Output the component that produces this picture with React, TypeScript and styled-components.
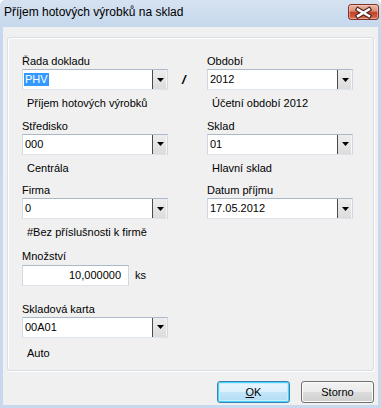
import styled, { createGlobalStyle, css } from 'styled-components'

const GlobalStyle = createGlobalStyle`
  html, body {
    margin: 0;
    padding: 0;
    background: #ffffff;
  }
  body {
    font-family: "Liberation Sans", Arial, sans-serif;
    font-size: 11px;
    color: #000;
  }
`

const ArrowIcon = () => (
  <svg width="7" height="4" viewBox="0 0 7 4">
    <path d="M0 0h7L3.5 4z" fill="#000" />
  </svg>
)

const CloseIcon = () => (
  <svg width="31" height="16" viewBox="0 0 31 16">
    <path d="M10 5.5l11 6.5M21 5.5l-11 6.5" stroke="#4a2318" strokeWidth="4.6" strokeLinecap="square" />
    <path d="M10 5.5l11 6.5M21 5.5l-11 6.5" stroke="#ffffff" strokeWidth="2.4" strokeLinecap="square" />
  </svg>
)

type ComboProps = { value: string; selected?: boolean }

const ComboBox = ({ value, selected }: ComboProps) => (
  <Combo>
    <ComboValue>{selected ? <Selected>{value}</Selected> : value}</ComboValue>
    <DropButton>
      <ArrowIcon />
    </DropButton>
  </Combo>
)

type FieldProps = {
  label: string
  value: string
  note?: string
  selected?: boolean
  noteGap?: number
}

const Field = ({ label, value, note, selected, noteGap = 7 }: FieldProps) => (
  <FieldBox>
    <Label>{label}</Label>
    <ComboBox value={value} selected={selected} />
    {note && <Note $gap={noteGap}>{note}</Note>}
  </FieldBox>
)

const App = () => {
  return (
    <>
      <GlobalStyle />
      <Window>
        <TitleBar>
          <Caption>Příjem hotových výrobků na sklad</Caption>
          <CloseButton>
            <CloseIcon />
          </CloseButton>
        </TitleBar>
        <Client>
          <GroupBox>
            <FormRow $gap={0}>
              <Field label="Řada dokladu" value="PHV" selected note="Příjem hotových výrobků" />
              <Slash>/</Slash>
              <Field label="Období" value="2012" note="Účetní období 2012" />
            </FormRow>
            <FormRow $gap={9.5}>
              <Field label="Středisko" value="000" note="Centrála" />
              <span />
              <Field label="Sklad" value="01" note="Hlavní sklad" />
            </FormRow>
            <FormRow $gap={9.5}>
              <Field label="Firma" value="0" note="#Bez příslušnosti k firmě" />
              <span />
              <Field label="Datum příjmu" value="17.05.2012" />
            </FormRow>
            <FormRow $gap={10.5}>
              <FieldBox>
                <Label>Množství</Label>
                <QuantityLine>
                  <Edit>10,000000</Edit>
                  <Unit>ks</Unit>
                </QuantityLine>
              </FieldBox>
            </FormRow>
            <FormRow $gap={17}>
              <Field label="Skladová karta" value="00A01" note="Auto" noteGap={9} />
            </FormRow>
          </GroupBox>
          <ButtonBar>
            <DialogButton $primary>
              <u>O</u>K
            </DialogButton>
            <DialogButton>Storno</DialogButton>
          </ButtonBar>
        </Client>
      </Window>
    </>
  )
}

const Window = styled.div`
  width: 381px;
  height: 408px;
  box-sizing: border-box;
  display: flex;
  flex-direction: column;
  background: linear-gradient(#d5e2f1 0px, #c6d8ed 27px, #c8d9ee 100%);
  border-top-left-radius: 5px;
  border-top-right-radius: 5px;
  overflow: hidden;
`

const TitleBar = styled.div`
  height: 27px;
  flex: none;
  display: flex;
  align-items: flex-start;
  padding: 0 2px 0 4px;
  box-sizing: border-box;
`

const Caption = styled.div`
  padding-top: 5px;
  font-size: 12px;
  line-height: 14px;
  color: #000;
  flex: 1;
`

const CloseButton = styled.div`
  width: 31px;
  height: 16px;
  margin-top: 4px;
  box-sizing: border-box;
  border: 1px solid #7f3324;
  border-radius: 3px;
  background: linear-gradient(#eab7a8 0%, #dc8b76 45%, #c4412b 50%, #cd5640 80%, #dc7a62 100%);
  box-shadow: inset 0 0 0 1px rgba(255, 220, 210, 0.45);
  display: flex;
  align-items: center;
  justify-content: center;
  svg {
    margin: -1px;
  }
`

const Client = styled.div`
  flex: 1;
  margin: 0 3px 3px;
  background: #f0f0f0;
  display: flex;
  flex-direction: column;
`

const GroupBox = styled.div`
  height: 334px;
  margin: 10px 4px 0;
  box-sizing: border-box;
  border: 1px solid #d5dfe5;
  border-radius: 3px;
  box-shadow: inset 1px 1px 0 #ffffff, 1px 1px 0 #ffffff;
  padding: 17px 0 0 14px;
  display: flex;
  flex-direction: column;
`

const FormRow = styled.div<{ $gap: number }>`
  display: grid;
  grid-template-columns: 146px 39px 146px;
  align-items: start;
  margin-top: ${(p) => p.$gap}px;
`

const FieldBox = styled.div`
  display: flex;
  flex-direction: column;
  align-items: flex-start;
`

const Label = styled.div`
  font-size: 11px;
  line-height: 13px;
  height: 13px;
  white-space: nowrap;
`

const Combo = styled.div`
  margin-top: 1px;
  width: 146px;
  height: 21px;
  box-sizing: border-box;
  border: 1px solid;
  border-color: #abb8c8 #cfd9e5 #dde4ec #cfd9e5;
  background: #ffffff;
  display: flex;
  align-items: stretch;
`

const ComboValue = styled.div`
  flex: 1;
  display: flex;
  align-items: center;
  padding-left: 2px;
  font-size: 11px;
  line-height: 13px;
  white-space: nowrap;
`

const Selected = styled.span`
  background: #3399ff;
  color: #ffffff;
  padding: 0 1px;
  margin-left: -1px;
`

const DropButton = styled.div`
  width: 14px;
  border-left: 1px solid #4a4a4a;
  background: linear-gradient(#ededed, #dcdcdc);
  box-shadow: inset -1px 0 0 #f6f6f6;
  display: flex;
  align-items: center;
  justify-content: center;
`

const Note = styled.div<{ $gap: number }>`
  margin-top: ${(p) => p.$gap}px;
  padding-left: 5px;
  font-size: 11px;
  line-height: 13px;
  white-space: nowrap;
`

const Slash = styled.div`
  margin-top: 14px;
  height: 21px;
  display: flex;
  align-items: center;
  padding-left: 14px;
  font-size: 13px;
  font-weight: bold;
  font-style: italic;
`

const QuantityLine = styled.div`
  margin-top: 2px;
  display: flex;
  align-items: center;
`

const Edit = styled.div`
  width: 107px;
  height: 21px;
  box-sizing: border-box;
  border: 1px solid;
  border-color: #abb8c8 #cfd9e5 #dde4ec #cfd9e5;
  background: #ffffff;
  padding-right: 7px;
  display: flex;
  align-items: center;
  justify-content: flex-end;
  font-size: 11px;
`

const Unit = styled.span`
  margin-left: 6px;
  font-size: 11px;
`

const ButtonBar = styled.div`
  display: flex;
  justify-content: flex-end;
  gap: 11px;
  margin: 10px 4px 0;
`

const DialogButton = styled.div<{ $primary?: boolean }>`
  width: 73px;
  height: 22px;
  box-sizing: border-box;
  border-radius: 3px;
  display: flex;
  align-items: center;
  justify-content: center;
  font-size: 11px;
  color: #000;
  border: 1px solid #707070;
  background: linear-gradient(#f2f2f2 0%, #ebebeb 50%, #dddddd 50%, #cfcfcf 100%);
  box-shadow: inset 0 0 0 1px #fbfbfb;
  ${(p) =>
    p.$primary &&
    css`
      border-color: #3c7fb1;
      background: linear-gradient(#e9f6fd 0%, #dbf1fd 50%, #c4e6fa 50%, #b0dcf5 100%);
      box-shadow: inset 0 0 0 1px #48d4fc, inset 0 0 0 2px #c8ecfc;
    `}
  u {
    text-decoration: underline;
    text-underline-offset: 1px;
  }
`

export default App
